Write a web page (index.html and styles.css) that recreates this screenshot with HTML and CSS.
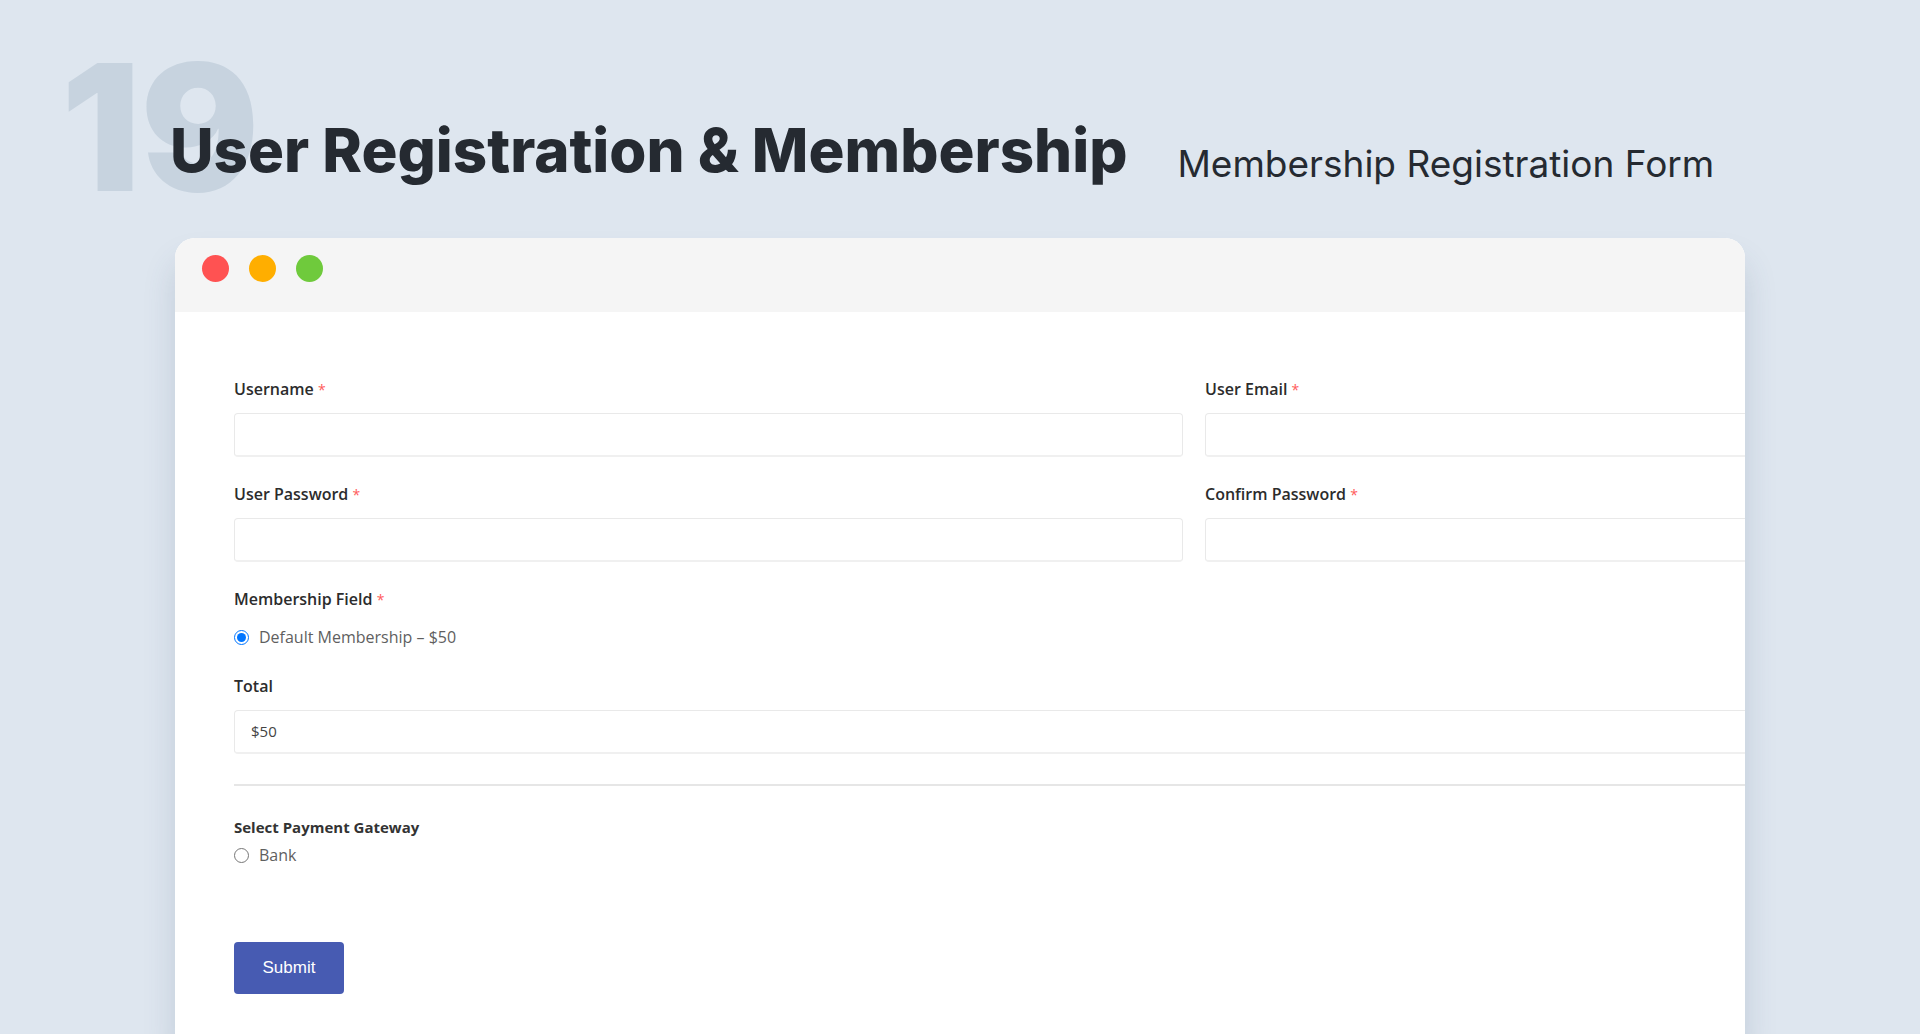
FILE: index.html
```html
<!DOCTYPE html>
<html lang="en">
<head>
<meta charset="utf-8">
<title>User Registration &amp; Membership</title>
<link rel="stylesheet" href="styles.css">
</head>
<body>
<main class="page">
  <header class="heading">
    <span class="number">19</span>
    <h1 class="title">User Registration &amp; Membership</h1>
    <p class="subtitle">Membership Registration Form</p>
  </header>
  <section class="window">
    <div class="titlebar">
      <span class="dot dot-red"></span>
      <span class="dot dot-amber"></span>
      <span class="dot dot-green"></span>
    </div>
    <form class="form">
      <div class="grid">
        <div class="field">
          <label class="label" for="username">Username <span class="required">*</span></label>
          <input class="input" id="username" type="text">
        </div>
        <div class="field">
          <label class="label" for="email">User Email <span class="required">*</span></label>
          <input class="input" id="email" type="email">
        </div>
        <div class="field">
          <label class="label" for="password">User Password <span class="required">*</span></label>
          <input class="input" id="password" type="password">
        </div>
        <div class="field">
          <label class="label" for="confirm">Confirm Password <span class="required">*</span></label>
          <input class="input" id="confirm" type="password">
        </div>
      </div>
      <div class="field field-options" role="group" aria-labelledby="membership-label">
        <span class="label" id="membership-label">Membership Field <span class="required">*</span></span>
        <label class="option"><input class="radio" type="radio" name="membership" checked>Default Membership – $50</label>
      </div>
      <div class="field">
        <label class="label" for="total">Total</label>
        <input class="input" id="total" type="text" value="$50" readonly>
      </div>
      <div class="gateway" role="group" aria-labelledby="gateway-label">
        <span class="gateway-label" id="gateway-label">Select Payment Gateway</span>
        <label class="option"><input class="radio" type="radio" name="gateway">Bank</label>
      </div>
      <button class="submit" type="button">Submit</button>
    </form>
  </section>
</main>
</body>
</html>
```
FILE: styles.css
```css
* {
  box-sizing: border-box;
}

body {
  margin: 0;
  background: #dee6ef;
  color: #252a31;
  font-family: "Open Sans", "Noto Sans", sans-serif;
}

.page {
  display: flex;
  flex-direction: column;
  min-height: 100vh;
  padding: 110px 175px 0;
  overflow: hidden;
}

.heading {
  position: relative;
  display: flex;
  align-items: flex-start;
  gap: 50px;
  height: 128px;
  flex: none;
  font-family: Inter, "Liberation Sans", sans-serif;
  white-space: nowrap;
}

.number {
  position: absolute;
  top: -83px;
  left: -114px;
  color: #c7d3df;
  font-size: 176px;
  font-weight: 900;
  line-height: 200px;
}

.title {
  position: relative;
  margin: 0 0 0 -5px;
  font-size: 60px;
  font-weight: 800;
  line-height: 80px;
}

.subtitle {
  margin: 0;
  padding-top: 24px;
  font-size: 37px;
  line-height: 60px;
}

.window {
  flex: 1;
  overflow: hidden;
  background: #fff;
  border-radius: 20px 20px 0 0;
  box-shadow: 0 24px 32px rgba(60, 85, 115, 0.18);
}

.titlebar {
  display: flex;
  gap: 20px;
  height: 74px;
  padding: 17px 27px;
  background: #f5f5f5;
}

.dot {
  width: 27px;
  height: 27px;
  border-radius: 50%;
}

.dot-red {
  background: #ff5252;
}

.dot-amber {
  background: #ffae00;
}

.dot-green {
  background: #6fca3c;
}

.form {
  display: flex;
  flex-direction: column;
  gap: 25px;
  width: 100vw;
  margin-left: 59px;
  padding-top: 65px;
  font-size: 16px;
  line-height: 24px;
}

.grid {
  display: grid;
  grid-template-columns: 1fr 1fr;
  gap: 25px 22px;
}

.field {
  display: flex;
  flex-direction: column;
  gap: 12px;
}

.field-options {
  gap: 14px;
}

.label {
  color: #2c2c2c;
  font-weight: 600;
}

.required {
  color: #ff5b5b;
  font-size: 14px;
  font-weight: 400;
  line-height: 16px;
}

.input {
  width: 100%;
  height: 44px;
  padding: 0 16px 2px;
  border: 1px solid #e9e9e9;
  border-bottom: 2px solid #f0f0f0;
  border-radius: 4px;
  background: #fff;
  color: #444;
  font: 15px "Open Sans", "Noto Sans", sans-serif;
}

.option {
  display: flex;
  align-items: center;
  gap: 10px;
  color: #5f5f5f;
}

.radio {
  width: 15px;
  height: 15px;
  margin: 0;
}

.gateway {
  display: flex;
  flex-direction: column;
  gap: 4px;
  margin-top: 5px;
  padding-top: 29px;
  border-top: 2px solid #e6e6e6;
}

.gateway-label {
  color: #333;
  font-size: 15px;
  font-weight: 700;
}

.submit {
  align-self: flex-start;
  width: 110px;
  height: 52px;
  margin-top: 50px;
  border: 0;
  border-radius: 4px;
  background: #475bb2;
  color: #fff;
  font: 17px "Liberation Sans", sans-serif;
}
```
